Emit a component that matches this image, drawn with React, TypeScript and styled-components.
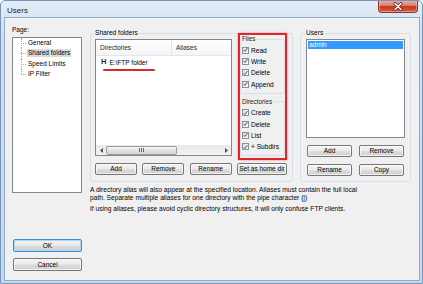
import React from "react";
import styled, { createGlobalStyle, css } from "styled-components";

const FONT = `"Liberation Sans", Arial, sans-serif`;

const GlobalStyle = createGlobalStyle`
  html, body { margin: 0; padding: 0; background: #ffffff; }
  body { font-family: ${FONT}; }
  * { box-sizing: border-box; }
`;

const Window = styled.div`
  width: 423px;
  height: 284px;
  display: flex;
  flex-direction: column;
  background: linear-gradient(#e4edf7, #cfe0f2 30px, #c2d9f0);
  border: 1px solid #7795bb;
  border-radius: 5px 5px 0 0;
  font-family: ${FONT};
  color: #000;
  overflow: hidden;
`;

const TitleBar = styled.div`
  height: 16px;
  display: flex;
  align-items: flex-start;
  justify-content: space-between;
  padding-left: 6px;
  padding-right: 4px;
`;

const Title = styled.div`
  font-size: 8px;
  line-height: 9px;
  margin-top: 5px;
  color: #1a1a1a;
`;

const CloseButton = styled.div`
  width: 40px;
  height: 13px;
  margin-top: -1px;
  border: 1px solid #8c3325;
  border-top: none;
  border-radius: 0 0 4px 4px;
  background: linear-gradient(#ecb8ac 0%, #dc7e69 45%, #c5391f 55%, #d55c40 100%);
  box-shadow: inset 0 0 0 1px rgba(255, 210, 200, 0.5);
  display: flex;
  align-items: center;
  justify-content: center;
`;

const Client = styled.div`
  flex: 1;
  margin: 0 2px 2px 3px;
  border: 1px solid #93abc8;
  background: #f0f0f0;
  display: flex;
  padding: 8px 0 0 7px;
  font-size: 6.5px;
`;

const LeftCol = styled.div`
  width: 70px;
  display: flex;
  flex-direction: column;
`;

const PageLabel = styled.div`
  line-height: 8px;
  margin-bottom: 3px;
`;

const Tree = styled.div`
  height: 156px;
  border: 1px solid #828790;
  background: #fff;
  padding-top: 0;
`;

const TreeItem = styled.div<{ $last?: boolean }>`
  position: relative;
  height: 10.3px;
  display: flex;
  align-items: center;
  padding-left: 14px;
  line-height: 8px;
  &::before {
    content: "";
    position: absolute;
    left: 8px;
    top: 50%;
    width: 5px;
    border-top: 1px dotted #a8a8a8;
  }
  &::after {
    content: "";
    position: absolute;
    left: 8px;
    top: 0;
    height: ${(p) => (p.$last ? "50%" : "100%")};
    border-left: 1px dotted #a8a8a8;
  }
`;

const TreeLabel = styled.span<{ $selected?: boolean }>`
  padding: 0 1px;
  line-height: 8px;
  ${(p) =>
    p.$selected &&
    css`
      background: #d9d9d9;
    `}
`;

const Button = styled.button<{ $w?: number; $h?: number; $default?: boolean }>`
  width: ${(p) => (p.$w ? `${p.$w}px` : "auto")};
  height: ${(p) => p.$h ?? 12}px;
  padding: 0;
  margin: 0;
  font-family: ${FONT};
  font-size: 6.5px;
  line-height: 8px;
  color: #000;
  border: 1px solid ${(p) => (p.$default ? "#3c8dcb" : "#767676")};
  border-radius: 2px;
  background: linear-gradient(#f3f3f3 0%, #ebebeb 48%, #dddddd 52%, #cfcfcf 100%);
  box-shadow: inset 0 0 0 1px ${(p) => (p.$default ? "rgba(160,215,250,0.9)" : "rgba(255,255,255,0.7)")};
  display: flex;
  align-items: center;
  justify-content: center;
`;

const OkButton = styled(Button)`
  margin-top: 46px;
  margin-left: 1px;
`;

const CancelButton = styled(Button)`
  margin-top: 6px;
  margin-left: 1px;
`;

const RightArea = styled.div`
  margin-left: 8px;
  margin-top: 3px;
  width: 321px;
  display: flex;
  flex-direction: column;
`;

const TopRow = styled.div`
  display: flex;
  align-items: flex-start;
  gap: 7px;
`;

const GroupBox = styled.fieldset<{ $w: number; $pl?: number; $pb?: number }>`
  width: ${(p) => p.$w}px;
  margin: 0;
  min-width: 0;
  padding: 2px 5px ${(p) => p.$pb ?? 5}px ${(p) => p.$pl ?? 5}px;
  border: 1px solid #d5dfe5;
  border-radius: 3px;
  display: flex;
  flex-direction: column;
`;

const Legend = styled.legend`
  padding: 0 1px;
  margin-left: -1px;
  font-size: 6.6px;
  line-height: 8px;
`;

const SharedInner = styled.div`
  display: flex;
  align-items: flex-start;
  gap: 6px;
`;

const DirList = styled.div`
  width: 137px;
  height: 117px;
  border: 1px solid #828790;
  background: #fff;
  display: flex;
  flex-direction: column;
`;

const ListHeader = styled.div`
  height: 16px;
  display: flex;
  background: linear-gradient(#ffffff, #f3f5f8);
  border-bottom: 1px solid #e3e5e8;
`;

const HeaderCell = styled.div<{ $w?: number }>`
  ${(p) => (p.$w ? `width: ${p.$w}px; border-right: 1px solid #e3e5e8;` : "flex: 1;")}
  padding-left: 4px;
  display: flex;
  align-items: center;
  color: #2b2b2b;
`;

const DirRow = styled.div`
  margin-top: 2px;
  padding-left: 5px;
  display: flex;
  flex-direction: column;
`;

const DirLine = styled.div`
  height: 8px;
  display: flex;
  align-items: center;
  gap: 3px;
`;

const HomeMark = styled.span`
  font-weight: bold;
  font-size: 7.5px;
  color: #1c2a44;
  line-height: 8px;
`;

const Underline = styled.div`
  width: 52px;
  height: 2px;
  margin-top: 3px;
  margin-left: 2px;
  background: #d82a2e;
  border-radius: 1px;
`;

const Spacer = styled.div`
  flex: 1;
`;

const HScroll = styled.div`
  height: 10px;
  display: flex;
  align-items: center;
  background: linear-gradient(#e8e8e8, #f2f2f2);
`;

const ScrollArrow = styled.div`
  width: 10px;
  height: 10px;
  display: flex;
  align-items: center;
  justify-content: center;
`;

const Thumb = styled.div`
  width: 71px;
  height: 9px;
  border: 1px solid #9c9c9c;
  border-radius: 2px;
  background: linear-gradient(#f6f6f6, #e2e2e2 50%, #d4d4d4);
  display: flex;
  align-items: center;
  justify-content: center;
`;

const PermPanel = styled.div`
  width: 49px;
  height: 127px;
  margin-top: -6px;
  border: 2px solid #e0262b;
  box-shadow: 0 0 2px rgba(190, 20, 20, 0.45);
  display: flex;
  flex-direction: column;
`;

const PermGroup = styled.fieldset<{ $mt?: number }>`
  margin: ${(p) => p.$mt ?? 0}px 0 0 0;
  min-width: 0;
  padding: 1.5px 1px 3px 1px;
  border: 1px solid #d5dfe5;
  border-radius: 2px;
  display: flex;
  flex-direction: column;
`;

const PermLegend = styled.legend`
  padding: 0 1px;
  margin-left: -1px;
  font-size: 6.3px;
  line-height: 8px;
  color: #222;
`;

const CheckRow = styled.label`
  height: 11.3px;
  display: flex;
  align-items: center;
  gap: 2px;
  font-size: 6.6px;
  white-space: nowrap;
`;

const CheckBox = styled.span`
  width: 7px;
  height: 7px;
  border: 1px solid #8e8f8f;
  background: linear-gradient(135deg, #dcdcdc, #ffffff);
  display: flex;
  align-items: center;
  justify-content: center;
  flex: none;
`;

const ButtonRow = styled.div`
  margin-top: 3px;
  display: flex;
  justify-content: space-between;
`;

const UsersList = styled.div`
  height: 99px;
  border: 1px solid #828790;
  background: #fff;
`;

const UserRow = styled.div<{ $selected?: boolean }>`
  margin: 1px 1px 0 1px;
  height: 8px;
  line-height: 8px;
  padding-left: 1px;
  ${(p) =>
    p.$selected &&
    css`
      background: #3399ff;
      color: #fff;
    `}
`;

const UserButtons = styled.div`
  margin-top: 7px;
  padding: 0 1px;
  display: grid;
  grid-template-columns: 1fr 1fr;
  gap: 7px;
`;

const Description = styled.div`
  margin-top: 4px;
  font-size: 6.65px;
  line-height: 8px;
  white-space: nowrap;
`;

const Para = styled.p<{ $mt?: number }>`
  margin: ${(p) => p.$mt ?? 0}px 0 0 0;
`;

const Check = () => (
  <svg width="6" height="6" viewBox="0 0 6 6">
    <path d="M0.8 3.2 L2.3 4.8 L5.3 0.8" fill="none" stroke="#26439a" strokeWidth="1.1" />
  </svg>
);

const CheckItem = ({ label }: { label: string }) => (
  <CheckRow>
    <CheckBox>
      <Check />
    </CheckBox>
    {label}
  </CheckRow>
);

export default function App() {
  return (
    <>
      <GlobalStyle />
      <Window>
        <TitleBar>
          <Title>Users</Title>
          <CloseButton>
            <svg width="10" height="9" viewBox="0 0 10 9">
              <path d="M2 1.5 L8 7.5 M8 1.5 L2 7.5" stroke="#5a1c12" strokeWidth="3" strokeLinecap="round" />
              <path d="M2 1.5 L8 7.5 M8 1.5 L2 7.5" stroke="#ffffff" strokeWidth="1.6" strokeLinecap="round" />
            </svg>
          </CloseButton>
        </TitleBar>
        <Client>
          <LeftCol>
            <PageLabel>Page:</PageLabel>
            <Tree>
              <TreeItem>
                <TreeLabel>General</TreeLabel>
              </TreeItem>
              <TreeItem>
                <TreeLabel $selected>Shared folders</TreeLabel>
              </TreeItem>
              <TreeItem>
                <TreeLabel>Speed Limits</TreeLabel>
              </TreeItem>
              <TreeItem $last>
                <TreeLabel>IP Filter</TreeLabel>
              </TreeItem>
            </Tree>
            <OkButton $w={69} $h={13} $default>
              OK
            </OkButton>
            <CancelButton $w={69} $h={13}>
              Cancel
            </CancelButton>
          </LeftCol>
          <RightArea>
            <TopRow>
              <GroupBox $w={203} $pl={4} $pb={6}>
                <Legend>Shared folders</Legend>
                <SharedInner>
                  <DirList>
                    <ListHeader>
                      <HeaderCell $w={76}>Directories</HeaderCell>
                      <HeaderCell>Aliases</HeaderCell>
                    </ListHeader>
                    <DirRow>
                      <DirLine>
                        <HomeMark>H</HomeMark>
                        <span>E:\FTP folder</span>
                      </DirLine>
                      <Underline />
                    </DirRow>
                    <Spacer />
                    <HScroll>
                      <ScrollArrow>
                        <svg width="3" height="5" viewBox="0 0 3 5">
                          <path d="M3 0 L0 2.5 L3 5 Z" fill="#4d4d4d" />
                        </svg>
                      </ScrollArrow>
                      <Thumb>
                        <svg width="6" height="4" viewBox="0 0 6 4">
                          <path d="M0.5 0 V4 M2.5 0 V4 M4.5 0 V4" stroke="#6a6a6a" strokeWidth="1" />
                        </svg>
                      </Thumb>
                      <Spacer />
                      <ScrollArrow>
                        <svg width="3" height="5" viewBox="0 0 3 5">
                          <path d="M0 0 L3 2.5 L0 5 Z" fill="#4d4d4d" />
                        </svg>
                      </ScrollArrow>
                    </HScroll>
                  </DirList>
                  <PermPanel>
                    <PermGroup>
                      <PermLegend>Files</PermLegend>
                      <CheckItem label="Read" />
                      <CheckItem label="Write" />
                      <CheckItem label="Delete" />
                      <CheckItem label="Append" />
                    </PermGroup>
                    <PermGroup $mt={4}>
                      <PermLegend>Directories</PermLegend>
                      <CheckItem label="Create" />
                      <CheckItem label="Delete" />
                      <CheckItem label="List" />
                      <CheckItem label="+ Subdirs" />
                    </PermGroup>
                  </PermPanel>
                </SharedInner>
                <ButtonRow>
                  <Button $w={42}>Add</Button>
                  <Button $w={42}>Remove</Button>
                  <Button $w={42}>Rename</Button>
                  <Button $w={50}>Set as home dir</Button>
                </ButtonRow>
              </GroupBox>
              <GroupBox $w={111}>
                <Legend>Users</Legend>
                <UsersList>
                  <UserRow $selected>admin</UserRow>
                </UsersList>
                <UserButtons>
                  <Button>Add</Button>
                  <Button>Remove</Button>
                  <Button>Rename</Button>
                  <Button>Copy</Button>
                </UserButtons>
              </GroupBox>
            </TopRow>
            <Description>
              <Para>
                A directory alias will also appear at the specified location. Aliases must contain the full local
                <br />
                path. Separate multiple aliases for one directory with the pipe character (|)
              </Para>
              <Para $mt={3}>
                If using aliases, please avoid cyclic directory structures, it will only confuse FTP clients.
              </Para>
            </Description>
          </RightArea>
        </Client>
      </Window>
    </>
  );
}
